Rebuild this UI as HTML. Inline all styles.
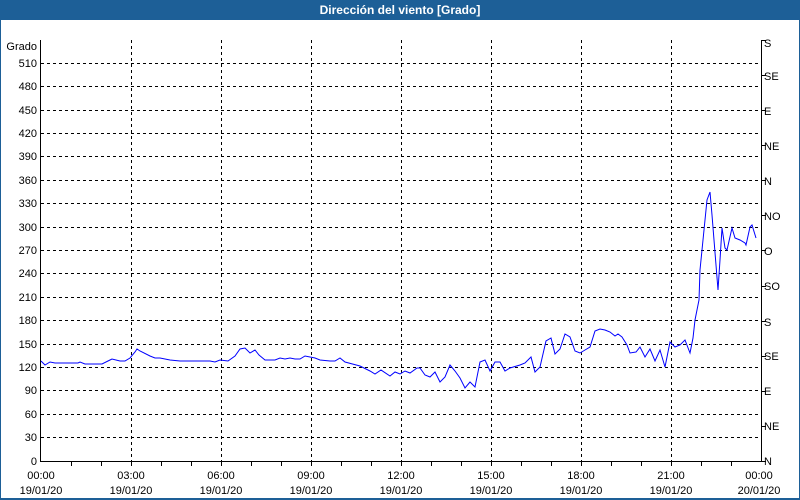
<!DOCTYPE html>
<html><head><meta charset="utf-8"><style>
html,body{margin:0;padding:0;width:800px;height:500px;overflow:hidden;background:#fff}
svg{display:block}
text{font-family:"Liberation Sans",sans-serif;font-size:11px;fill:#000}
</style></head><body>
<svg width="800" height="500" xmlns="http://www.w3.org/2000/svg">
<rect x="0" y="0" width="800" height="500" fill="#fff"/>
<rect x="0" y="0" width="800" height="20" fill="#1d5f97"/>
<rect x="0" y="0" width="1" height="500" fill="#1d5f97"/>
<rect x="799" y="0" width="1" height="500" fill="#1d5f97"/>
<rect x="0" y="498" width="800" height="2" fill="#1d5f97"/>
<text x="400" y="14" text-anchor="middle" style="fill:#fff;font-weight:bold;font-size:12px">Dirección del viento [Grado]</text>
<g stroke="#000" stroke-width="1" stroke-dasharray="3,3" fill="none">
<path d="M41 63.5H761M41 86.5H761M41 110.5H761M41 133.5H761M41 156.5H761M41 180.5H761M41 203.5H761M41 227.5H761M41 250.5H761M41 273.5H761M41 297.5H761M41 320.5H761M41 344.5H761M41 367.5H761M41 390.5H761M41 414.5H761M41 437.5H761"/>
<path d="M131.5 40V461M221.5 40V461M311.5 40V461M401.5 40V461M491.5 40V461M581.5 40V461M671.5 40V461"/>
</g>
<path d="M40.5 40V461.5H761.5V40" stroke="#000" fill="none"/>
<g stroke="#000">
<path d="M71.5 461V466M101.5 461V466M131.5 461V466M161.5 461V466M191.5 461V466M221.5 461V466M251.5 461V466M281.5 461V466M311.5 461V466M341.5 461V466M371.5 461V466M401.5 461V466M431.5 461V466M461.5 461V466M491.5 461V466M521.5 461V466M551.5 461V466M581.5 461V466M611.5 461V466M641.5 461V466M671.5 461V466M701.5 461V466M731.5 461V466"/>
<path d="M761 40.5H766M761 75.5H766M761 110.5H766M761 145.5H766M761 180.5H766M761 215.5H766M761 250.5H766M761 286.5H766M761 321.5H766M761 356.5H766M761 391.5H766M761 426.5H766M761 461.5H766"/>
</g>
<g text-anchor="end">
<text x="37" y="50">Grado</text>
<text x="37" y="67">510</text><text x="37" y="90">480</text><text x="37" y="114">450</text><text x="37" y="137">420</text><text x="37" y="160">390</text><text x="37" y="184">360</text><text x="37" y="207">330</text><text x="37" y="231">300</text><text x="37" y="254">270</text><text x="37" y="277">240</text><text x="37" y="301">210</text><text x="37" y="324">180</text><text x="37" y="348">150</text><text x="37" y="371">120</text><text x="37" y="394">90</text><text x="37" y="418">60</text><text x="37" y="441">30</text><text x="37" y="465">0</text>
</g>
<g>
<text x="764" y="47">S</text><text x="764" y="80">SE</text><text x="764" y="115">E</text><text x="764" y="150">NE</text><text x="764" y="185">N</text><text x="764" y="220">NO</text><text x="764" y="255">O</text><text x="764" y="290">SO</text><text x="764" y="326">S</text><text x="764" y="360">SE</text><text x="764" y="395">E</text><text x="764" y="430">NE</text><text x="764" y="465">N</text>
</g>
<g text-anchor="middle">
<text x="41" y="479">00:00</text><text x="41" y="494">19/01/20</text>
<text x="131" y="479">03:00</text><text x="131" y="494">19/01/20</text>
<text x="221" y="479">06:00</text><text x="221" y="494">19/01/20</text>
<text x="311" y="479">09:00</text><text x="311" y="494">19/01/20</text>
<text x="401" y="479">12:00</text><text x="401" y="494">19/01/20</text>
<text x="491" y="479">15:00</text><text x="491" y="494">19/01/20</text>
<text x="581" y="479">18:00</text><text x="581" y="494">19/01/20</text>
<text x="671" y="479">21:00</text><text x="671" y="494">19/01/20</text>
<text x="759" y="479">00:00</text><text x="759" y="494">20/01/20</text>
</g>
<polyline fill="none" stroke="#0000ff" stroke-width="1" points="41,361 45,365 50,362 55,363 78,363 80,362 85,364 102,364 110,360 112,359 120,361 125,361 130,358 135,352 137,349 140,351 150,356 155,358 160,358 170,360 180,361 210,361 215,362 220,360 228,361 235,356 240,349 245,348 250,353 255,350 259,355 265,360 275,360 280,358 285,359 290,358 295,359 300,359 305,356 310,357 315,358 320,360 330,361 335,361 340,358 345,362 360,366 370,371 375,374 381,370 390,376 395,372 400,374 405,371 410,373 417,368 420,368 425,375 430,377 435,372 440,382 445,377 450,365 455,371 460,378 465,388 470,382 475,387 480,362 485,360 490,371 495,362 500,362 505,371 510,368 520,365 525,363 531,357 535,372 540,367 546,341 551,338 555,354 560,349 565,334 570,337 575,351 580,353 585,350 590,347 595,331 600,329 605,330 610,332 615,336 618,334 622,337 627,345 630,353 636,352 640,347 645,357 650,349 655,361 660,350 665,367 668,352 670,342 675,347 680,345 685,340 690,353 693,338 695,320 699,300 700,270 703,240 707,200 710,192 712,215 714,240 716,265 718,290 720,260 722,228 725,248 727,250 732,228 735,238 740,240 745,243 746,245 750,227 752,225 756,238"/>
</svg>
</body></html>
